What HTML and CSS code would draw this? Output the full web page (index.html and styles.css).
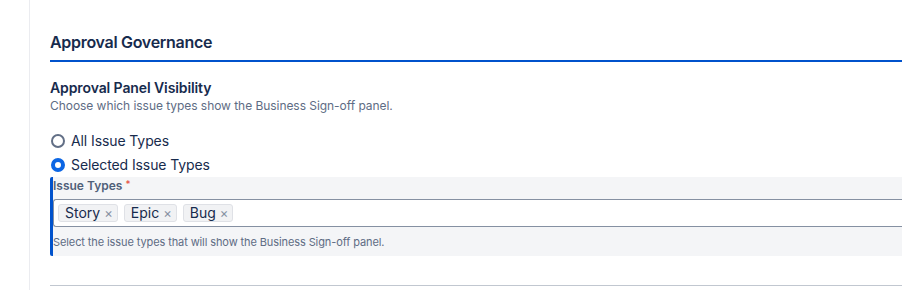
FILE: index.html
```html
<!DOCTYPE html>
<html>
<head>
<meta charset="utf-8">
<link rel="stylesheet" href="styles.css">
</head>
<body>
<div class="page">
  <section class="section">
    <h2 class="section-title">Approval Governance</h2>
    <div class="field">
      <div class="field-title">Approval Panel Visibility</div>
      <div class="field-desc">Choose which issue types show the Business Sign-off panel.</div>
      <div class="radios">
        <label class="radio-row"><span class="radio"></span><span class="radio-label">All Issue Types</span></label>
        <label class="radio-row"><span class="radio checked"></span><span class="radio-label">Selected Issue Types</span></label>
      </div>
      <div class="sub-panel">
        <div class="sub-label">Issue Types <span class="req">*</span></div>
        <div class="multi-input">
          <span class="tag">Story <span class="tag-x">×</span></span>
          <span class="tag">Epic <span class="tag-x">×</span></span>
          <span class="tag">Bug <span class="tag-x">×</span></span>
        </div>
        <div class="help">Select the issue types that will show the Business Sign-off panel.</div>
      </div>
    </div>
    <div class="divider"></div>
  </section>
</div>
</body>
</html>
```

FILE: styles.css
```css
html, body {
  margin: 0;
  padding: 0;
  background: #ffffff;
  overflow: hidden;
}
body {
  font-family: Inter, "Noto Sans", sans-serif;
  color: #172b4d;
  width: 902px;
  height: 290px;
}
.page {
  margin-left: 29px;
  border-left: 1px solid #ebecf0;
  height: 290px;
  padding-left: 20px;
  padding-top: 32px;
  box-sizing: border-box;
}
.section-title {
  margin: 0;
  font-size: 16px;
  line-height: 20px;
  font-weight: 600;
  letter-spacing: -0.3px;
  color: #172b4d;
  padding-bottom: 8px;
  border-bottom: 2px solid #0052cc;
}
.field {
  margin-top: 16px;
}
.field-title {
  font-size: 14px;
  line-height: 20px;
  font-weight: 600;
  letter-spacing: -0.1px;
}
.field-desc {
  font-size: 12px;
  line-height: 16px;
  color: #5e6c84;
  letter-spacing: -0.05px;
}
.radios {
  margin-top: 15px;
  display: flex;
  flex-direction: column;
}
.radio-row {
  display: flex;
  align-items: center;
  gap: 6px;
  height: 24px;
  padding-left: 1px;
}
.radio {
  width: 14px;
  height: 14px;
  border: 2px solid #626f86;
  border-radius: 50%;
  box-sizing: border-box;
  background: #fff;
}
.radio.checked {
  border: 4.5px solid #0c66e4;
  background: #fff;
}
.radio-label {
  font-size: 14px;
  line-height: 20px;
  color: #172b4d;
  letter-spacing: -0.1px;
}
.sub-panel {
  background: #f4f5f7;
  border-left: 3px solid #0052cc;
  border-radius: 2px 0 0 2px;
  padding: 1px 0 7px 0;
}
.sub-label {
  height: 16px;
  font-size: 12px;
  line-height: 16px;
  font-weight: 600;
  color: #505f79;
}
.req {
  color: #e5493a;
  font-size: 10px;
  font-weight: 400;
  line-height: 0;
  vertical-align: 2px;
}
.multi-input {
  margin-top: 5px;
  display: flex;
  align-items: center;
  gap: 6px;
  background: #fff;
  border: 1px solid #8590a2;
  border-right: none;
  border-radius: 3px 0 0 3px;
  padding: 4px 4px;
  height: 18px;
}
.tag {
  display: inline-flex;
  align-items: center;
  gap: 4px;
  height: 18px;
  box-sizing: border-box;
  padding: 0 4px 0 6px;
  background: #f1f2f4;
  border: 1px solid #dfe1e6;
  border-radius: 3px;
  font-size: 14px;
  line-height: 16px;
  color: #172b4d;
}
.tag-x {
  font-size: 13px;
  color: #8590a2;
}
.help {
  margin-top: 8px;
  font-size: 11px;
  line-height: 14px;
  color: #5e6c84;
  letter-spacing: -0.1px;
}
.divider {
  margin-top: 29px;
  height: 1px;
  background: #c1c7d0;
}
```
